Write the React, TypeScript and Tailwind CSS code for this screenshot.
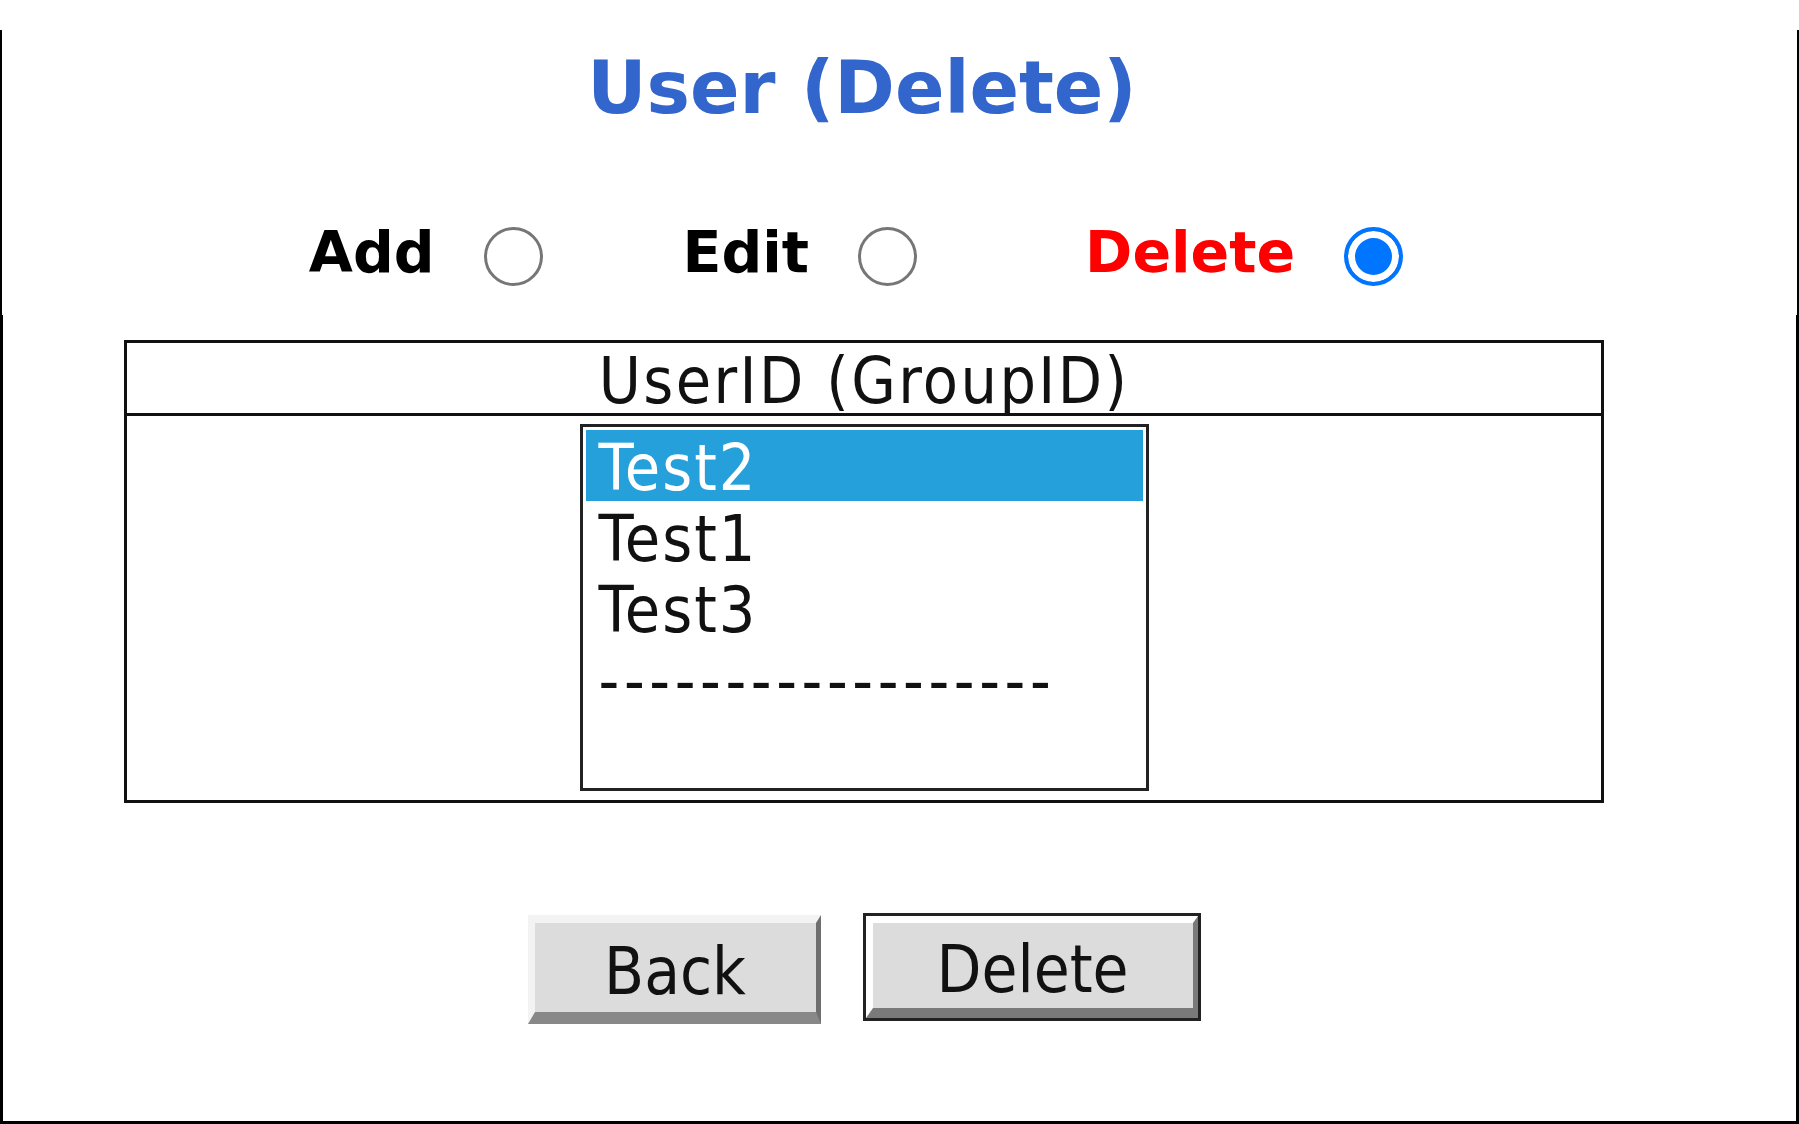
import { useState } from 'react';

const OPTIONS = ['Test2', 'Test1', 'Test3', '------------------', ''];

const bodyFont = { fontFamily: '"DejaVu Sans Condensed", "Liberation Sans", sans-serif' };

function Radio({ label, checked, red }: { label: string; checked?: boolean; red?: boolean }) {
  return (
    <label className="flex items-center">
      <span
        className={`mb-[7px] text-[57px] leading-none font-bold ${red ? 'text-[#ff0000]' : 'text-black'}`}
        style={{ fontFamily: '"DejaVu Sans", sans-serif' }}
      >
        {label}
      </span>
      <input
        type="radio"
        name="mode"
        defaultChecked={checked}
        className="ml-[49px] h-[59px] w-[59px] appearance-none rounded-full border-[3px] border-[#767676] bg-white checked:border-[4px] checked:border-[#0075ff] checked:bg-[#0075ff] checked:shadow-[inset_0_0_0_7px_white]"
      />
    </label>
  );
}

export default function App() {
  const [selected, setSelected] = useState(0);
  return (
    <div className="h-[1124px] w-full bg-white pt-[30px]">
      {/* header */}
      <div className="h-[285px] border-x-2 border-black">
        <div className="flex w-[1720px] flex-col items-center">
          <h1
            className="mt-[21px] text-[73px] leading-none font-bold text-[#3366cc]"
            style={{ fontFamily: '"DejaVu Sans", sans-serif' }}
          >
            User (Delete)
          </h1>
          <div className="mt-[100px] flex items-center pr-[12px]">
            <Radio label="Add" />
            <div className="w-[140px]" />
            <Radio label="Edit" />
            <div className="w-[168px]" />
            <Radio label="Delete" checked red />
          </div>
        </div>
      </div>

      {/* form */}
      <div className="h-[809px] border-x-[3px] border-b-[3px] border-black" style={bodyFont}>
        <div className="flex w-[1722px] flex-col items-center">
          <div className="mt-[25px] w-[1480px] border-[3px] border-[#111]">
            <div className="flex h-[73px] items-center justify-center border-b-[3px] border-[#111] pt-[6px] text-[64px] leading-none tracking-[2.4px] text-[#111]">
              UserID (GroupID)
            </div>
            <div className="flex justify-center pt-[8px] pb-[9px]">
              <div className="w-[569px] border-[3px] border-[#222] bg-white p-[3px]">
                {OPTIONS.map((o, i) => (
                  <div
                    key={i}
                    onClick={() => setSelected(i)}
                    className={`h-[71px] pr-[11px] pl-[13px] pt-[3px] text-[64px] leading-[71px] whitespace-pre ${
                      i === selected ? 'bg-[#26a0da] text-white' : 'text-[#111]'
                    } ${i === 3 ? 'tracking-[4.6px]' : 'tracking-[2px]'}`}
                  >
                    {o}
                  </div>
                ))}
              </div>
            </div>
          </div>

          <div className="mt-[110px] flex items-start gap-[42px]">
            <button className="mt-[2px] h-[109px] w-[293px] border-t-[8px] border-r-[5px] border-b-[12px] border-l-[7px] border-t-[#f3f3f3] border-r-[#6f6f6f] border-b-[#888888] border-l-[#f3f3f3] bg-[#dcdcdc] pt-[8px] text-[65px] leading-none text-[#111]">
              Back
            </button>
            <div className="border-[3px] border-[#222]">
              <button className="h-[102px] w-[332px] border-t-[7px] border-r-[5px] border-b-[10px] border-l-[7px] border-t-white border-r-[#7a7a7a] border-b-[#7a7a7a] border-l-white bg-[#dcdcdc] pt-[8px] text-[65px] leading-none text-[#111]">
                Delete
              </button>
            </div>
          </div>
        </div>
      </div>
    </div>
  );
}
